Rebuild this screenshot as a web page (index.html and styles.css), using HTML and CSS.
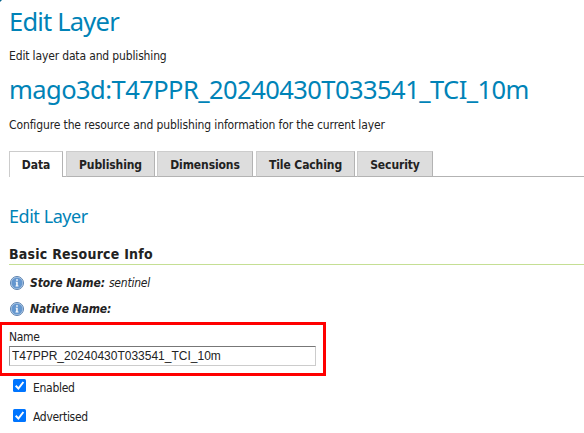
FILE: index.html
```
<!DOCTYPE html>
<html lang="en">
<head>
<meta charset="utf-8">
<title>Edit Layer</title>
<link rel="stylesheet" href="styles.css">
</head>
<body>
<svg class="corner" width="2" height="2" viewBox="0 0 2 2"><path d="M0 0h2L0 2z" fill="#08688f"/></svg>
<main class="page">
  <h1 class="title">Edit Layer</h1>
  <p class="description">Edit layer data and publishing</p>
  <h1 class="title resource">mago3d:T47PPR_20240430T033541_TCI_10m</h1>
  <p class="description configure">Configure the resource and publishing information for the current layer</p>
  <nav class="tabs">
    <a class="tab data active">Data</a>
    <a class="tab publishing">Publishing</a>
    <a class="tab dimensions">Dimensions</a>
    <a class="tab caching">Tile Caching</a>
    <a class="tab security">Security</a>
  </nav>
  <h2 class="subtitle">Edit Layer</h2>
  <h3 class="legend"><span>Basic Resource Info</span></h3>
  <div class="info">
    <svg class="icon" viewBox="0 0 14 14"><circle cx="7" cy="7" r="6.5" fill="#c3d8ef" stroke="#5b80ad"/><circle cx="7" cy="7" r="5.5" fill="#6597cf"/><path d="M6.2 3.2h1.6v1.5H6.2zM5.7 5.7h2v3.8h.8v.9H5.5v-.9h.7v-3h-.5z" fill="#fff"/></svg>
    <b class="store">Store Name:</b><i>sentinel</i>
  </div>
  <div class="info">
    <svg class="icon" viewBox="0 0 14 14"><circle cx="7" cy="7" r="6.5" fill="#c3d8ef" stroke="#5b80ad"/><circle cx="7" cy="7" r="5.5" fill="#6597cf"/><path d="M6.2 3.2h1.6v1.5H6.2zM5.7 5.7h2v3.8h.8v.9H5.5v-.9h.7v-3h-.5z" fill="#fff"/></svg>
    <b class="native">Native Name:</b>
  </div>
  <section class="highlight">
    <label class="name" for="name">Name</label>
    <input class="field" id="name" type="text" value="T47PPR_20240430T033541_TCI_10m">
  </section>
  <label class="check"><svg class="box" viewBox="0 0 13 13"><rect width="13" height="13" rx="1.5" fill="#0075ff"/><path d="M2.7 6.8l2.7 2.7 5-6.5" fill="none" stroke="#fff" stroke-width="2"/></svg><span class="enabled">Enabled</span></label>
  <label class="check"><svg class="box" viewBox="0 0 13 13"><rect width="13" height="13" rx="1.5" fill="#0075ff"/><path d="M2.7 6.8l2.7 2.7 5-6.5" fill="none" stroke="#fff" stroke-width="2"/></svg><span class="advertised">Advertised</span></label>
</main>
</body>
</html>
```
FILE: styles.css
```
* { box-sizing: border-box; }
body { margin: 0; background: #fff; color: #222; font: 12px/18px "DejaVu Sans Condensed", "DejaVu Sans", sans-serif; font-stretch: condensed; letter-spacing: -.3px; overflow: hidden; }
.corner { position: absolute; left: 0; top: 0; }
.page { height: 433px; padding-top: 4px; white-space: nowrap; }
h1, h2, h3, p { margin: 0; }
.title { height: 36px; margin-left: 9px; font-family: "Noto Sans", sans-serif; font-size: 25.5px; line-height: 34px; font-weight: 400; color: #0083b7; letter-spacing: -.8px; }
.description { height: 18px; margin: 7px 0 0 9px; letter-spacing: -.15px; }
.resource { margin-top: 7px; letter-spacing: -.55px; }
.configure { margin-top: 8px; letter-spacing: -.12px; }
.tabs { display: flex; height: 26px; margin-top: 17px; }
.tabs::before { content: ""; width: 9px; }
.tabs::after { content: ""; flex: 1; border-bottom: 1px solid #b3b3b3; }
.tab { display: flex; justify-content: center; height: 26px; background: #ddd; border: 1px solid #b3b3b3; border-top-color: #ccc; border-left-color: #ccc; font-weight: 700; font-size: 12px; line-height: 26px; letter-spacing: -.1px; }
.active { background: #fff; border-bottom: 0; }
.data { width: 54px; }
.publishing { width: 89px; }
.dimensions { width: 96px; }
.caching { width: 99px; }
.security { width: 76px; }
.tab { position: relative; margin-right: 3px; }
.publishing, .caching { margin-right: 2px; }
.security { margin-right: 0; }
.tab:not(.security)::after { content: ""; position: absolute; left: 100%; bottom: -1px; width: 4px; height: 1px; background: #b3b3b3; }
.active::after { bottom: 0 !important; }
.subtitle { height: 26px; margin: 27px 0 0 9px; font-family: "Noto Sans", sans-serif; font-size: 18px; line-height: 24px; font-weight: 400; color: #0083b7; letter-spacing: -.45px; }
.legend { height: 22px; margin: 13px 0 0 9px; border-bottom: 1px solid #c5df94; font-size: 14px; line-height: 22px; letter-spacing: .23px; }
.info { display: flex; align-items: center; height: 26px; padding-left: 10px; font-style: italic; }
.legend + .info { margin-top: 5px; }
.icon { width: 14px; height: 14px; margin-right: 6px; }
.info b { margin-right: 4px; letter-spacing: -.1px; }
.info i { letter-spacing: -.2px; }
.highlight { width: 327px; height: 54px; margin-left: -1px; border: 3px solid #f00; padding: 3px 7px; }
.name { display: block; height: 18px; line-height: 18px; }
.field { display: block; width: 307px; height: 20px; margin: 0; padding: 1px 2px 2px; border: 1px solid #ccc; border-top-color: #777; border-left-color: #999; background: #fff; color: #222; font: 12px "Liberation Sans", sans-serif; letter-spacing: 0; }
.check { display: flex; height: 30px; padding-left: 13px; }
.highlight + .check { margin-top: 3px; }
.check + .check { line-height: 16px; }
.box { width: 13px; height: 13px; margin-right: 7px; }
```
